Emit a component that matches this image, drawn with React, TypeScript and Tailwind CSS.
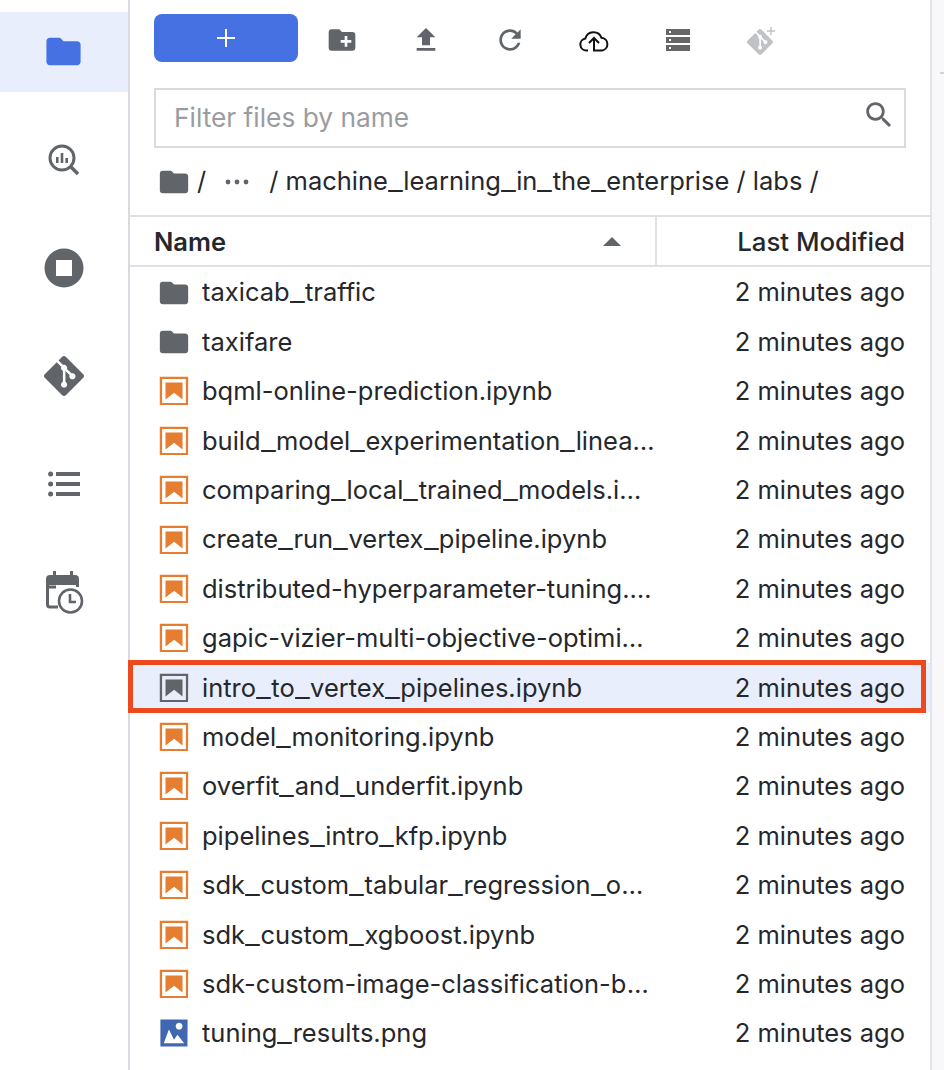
import React from 'react';
import { SiGit } from 'react-icons/si';

const FOLDER = 'M10 4H4c-1.1 0-1.99.9-1.99 2L2 18c0 1.1.9 2 2 2h16c1.1 0 2-.9 2-2V8c0-1.1-.9-2-2-2h-8l-2-2z';

const FolderIcon = ({ className }: { className: string }) => (
  <svg viewBox="0 0 24 24" className={className} fill="currentColor">
    <path d={FOLDER} />
  </svg>
);

const NotebookIcon = ({ className }: { className: string }) => (
  <svg viewBox="0 0 22 22" className={className} fill="currentColor">
    <path d="M18.7 3.3v15.4H3.3V3.3h15.4m1.5-1.5H1.8v18.3h18.3l.1-18.3z" />
    <path d="M16.5 16.5l-5.4-4.3-5.6 4.3v-11h11z" />
  </svg>
);

const ImageIcon = ({ className }: { className: string }) => (
  <svg viewBox="0 0 22 22" className={className}>
    <path fill="#fff" d="M2.2 2.2h17.5v17.5H2.2z" />
    <path
      fill="#3f68b0"
      d="M2.2 2.2v17.5h17.5l.1-17.5H2.2zm12.1 2.2c1.2 0 2.2 1 2.2 2.2s-1 2.2-2.2 2.2-2.2-1-2.2-2.2 1-2.2 2.2-2.2zM4.4 17.6l3.3-8.8 3.3 6.6 2.2-3.3 4.4 5.5H4.4z"
    />
  </svg>
);

// the underscores in the reference font are wider than Inter's here
const Wide = ({ text }: { text: string }) => (
  <>
    {text.split('_').map((part, i) => (
      <React.Fragment key={i}>
        {i > 0 && <span className="inline-block w-[15.3px] origin-left scale-x-[1.27]">_</span>}
        {part}
      </React.Fragment>
    ))}
  </>
);

const files: { name: string; type: 'folder' | 'notebook' | 'image'; selected?: boolean }[] = [
  { name: 'taxicab_traffic', type: 'folder' },
  { name: 'taxifare', type: 'folder' },
  { name: 'bqml-online-prediction.ipynb', type: 'notebook' },
  { name: 'build_model_experimentation_lineage_with_vertex.ipynb', type: 'notebook' },
  { name: 'comparing_local_trained_models.ipynb', type: 'notebook' },
  { name: 'create_run_vertex_pipeline.ipynb', type: 'notebook' },
  { name: 'distributed-hyperparameter-tuning.ipynb', type: 'notebook' },
  { name: 'gapic-vizier-multi-objective-optimization.ipynb', type: 'notebook' },
  { name: 'intro_to_vertex_pipelines.ipynb', type: 'notebook', selected: true },
  { name: 'model_monitoring.ipynb', type: 'notebook' },
  { name: 'overfit_and_underfit.ipynb', type: 'notebook' },
  { name: 'pipelines_intro_kfp.ipynb', type: 'notebook' },
  { name: 'sdk_custom_tabular_regression_online.ipynb', type: 'notebook' },
  { name: 'sdk_custom_xgboost.ipynb', type: 'notebook' },
  { name: 'sdk-custom-image-classification-batch.ipynb', type: 'notebook' },
  { name: 'tuning_results.png', type: 'image' },
];

const Sidebar = () => (
  <div className="w-[130px] shrink-0 border-r-2 border-[#d9dae0] pt-[12px] flex flex-col gap-[28px] text-[#616469]">
    <div className="h-[80px] bg-[#e8eefb] flex items-center justify-center text-[#4571e3]">
      <FolderIcon className="w-[41px] h-[41px] -ml-[2px] -mt-[2px]" />
    </div>
    <div className="h-[80px] flex items-center justify-center">
      <svg viewBox="0 0 32 32" className="w-[32px] h-[32px] ml-[-1px]">
        <circle cx="14" cy="14" r="12" fill="none" stroke="currentColor" strokeWidth="3" />
        <path d="M22.5 22.5L30 30" stroke="currentColor" strokeWidth="3.6" />
        <path d="M8 13h2.6v6H8zM12.7 9h2.6v10h-2.6zM17.4 14h2.6v5h-2.6z" fill="currentColor" />
      </svg>
    </div>
    <div className="h-[80px] flex items-center justify-center">
      <svg viewBox="0 0 40 40" className="w-[40px] h-[40px]">
        <circle cx="20" cy="20" r="19.5" fill="currentColor" />
        <rect x="12" y="12" width="16" height="16" fill="#fff" />
      </svg>
    </div>
    <div className="h-[80px] flex items-center justify-center">
      <SiGit className="w-[40px] h-[40px]" />
    </div>
    <div className="h-[80px] flex items-center justify-center">
      <svg viewBox="0 0 32 26" className="w-[32px] h-[26px]" fill="currentColor">
        <circle cx="2.6" cy="3" r="2.5" />
        <circle cx="2.6" cy="13" r="2.5" />
        <circle cx="2.6" cy="23" r="2.5" />
        <rect x="8" y="1" width="24" height="4" />
        <rect x="8" y="11" width="24" height="4" />
        <rect x="8" y="21" width="24" height="4" />
      </svg>
    </div>
    <div className="h-[80px] flex items-center justify-center">
      <svg viewBox="0 0 40 44" className="w-[40px] h-[44px]">
        <path
          d="M12 17H3.5M14 37H6a2.5 2.5 0 0 1-2.500-2.500V9A2.500 2.500 0 0 1 6 6.500h25A2.500 2.500 0 0 1 33.500 9v8"
          fill="none"
          stroke="currentColor"
          strokeWidth="3"
        />
        <path d="M3 8h31v7H3zM9 1h3v6H9zM26 1h3v6h-3z" fill="currentColor" />
        <circle cx="26.500" cy="31" r="11.500" fill="#fff" stroke="currentColor" strokeWidth="2.600" />
        <path d="M26 24v8h6" fill="none" stroke="currentColor" strokeWidth="2.600" />
      </svg>
    </div>
  </div>
);

const Toolbar = () => (
  <div className="flex items-center h-[48px] mt-[14px] ml-[24px] text-[#616469]">
    <button className="w-[144px] h-[48px] rounded-[8px] bg-[#4571e3] flex items-center justify-center">
      <svg viewBox="0 0 20 20" className="w-[20px] h-[20px]">
        <path d="M10 1v18M1 10h18" stroke="#fff" strokeWidth="2" />
      </svg>
    </button>
    <div className="flex items-center w-[84px] justify-center ml-[2px] mt-[4px]">
      <svg viewBox="0 0 24 24" className="w-[32px] h-[32px]" fill="currentColor">
        <path d="M20 6h-8l-2-2H4c-1.110 0-1.990.89-1.990 2L2 18c0 1.110.89 2 2 2h16c1.110 0 2-.89 2-2V8c0-1.110-.89-2-2-2zm-1 8h-3v3h-2v-3h-3v-2h3V9h2v3h3v2z" />
      </svg>
    </div>
    <div className="flex items-center w-[84px] justify-center mt-[4px]">
      <svg viewBox="0 0 24 24" className="w-[32px] h-[32px]" fill="currentColor">
        <path d="M9 16h6v-6h4l-7-7-7 7h4zm-4 2h14v2H5z" />
      </svg>
    </div>
    <div className="flex items-center w-[84px] justify-center mt-[4px]">
      <svg viewBox="0 0 24 24" className="w-[32px] h-[32px]" fill="currentColor">
        <path d="M17.650 6.350C16.200 4.900 14.210 4 12 4c-4.420 0-7.990 3.580-7.990 8s3.570 8 7.990 8c3.730 0 6.840-2.550 7.730-6h-2.080c-.82 2.330-3.040 4-5.650 4-3.310 0-6-2.690-6-6s2.690-6 6-6c1.660 0 3.140.69 4.220 1.780L13 11h7V4l-2.350 2.350z" />
      </svg>
    </div>
    <div className="flex items-center w-[84px] justify-center mt-[4px]">
      <svg viewBox="0 0 30 24" className="w-[30px] h-[24px]" fill="none" stroke="#111" strokeWidth="2">
        <path d="M9 22.500H7.500a6 6 0 0 1-1.200-11.900A8.500 8.500 0 0 1 22.500 9.800 6.400 6.400 0 0 1 23 22.500h-9" />
        <path d="M15 23V10.500M10 15l5-5 5 5" />
      </svg>
    </div>
    <div className="flex items-center w-[84px] justify-center mt-[4px]">
      <div className="w-[24px] flex flex-col gap-[2px]">
        {[0, 1, 2].map((i) => (
          <div key={i} className="h-[6px] bg-[#666] flex items-center pl-[3px]">
            <div className="w-[2px] h-[2px] bg-white" />
          </div>
        ))}
      </div>
    </div>
    <div className="relative flex items-center w-[84px] justify-center mt-[4px] text-[#c1c2c5]">
      <SiGit className="w-[26px] h-[26px] -ml-[4px] mt-[4px]" />
      <svg viewBox="0 0 8 8" className="absolute top-[2px] left-[47px] w-[8px] h-[8px]">
        <path d="M4 0v8M0 4h8" stroke="currentColor" strokeWidth="1.400" />
      </svg>
    </div>
  </div>
);

const Row = ({ file }: { file: (typeof files)[number] }) => (
  <div className={`relative flex items-center h-[49.4px] ${file.selected ? 'bg-[#e8eefb]' : ''}`}>
    <div className="w-[527px] shrink-0 flex items-center pl-[27px] pr-[2px]">
      {file.type === 'folder' && <FolderIcon className="w-[34px] h-[34px] shrink-0 text-[#616469]" />}
      {file.type === 'notebook' && (
        <NotebookIcon className={`w-[34px] h-[34px] shrink-0 ${file.selected ? 'text-[#616469]' : 'text-[#e57e31]'}`} />
      )}
      {file.type === 'image' && <ImageIcon className="w-[34px] h-[34px] shrink-0" />}
      <span className="ml-[11px] truncate">
        <Wide text={file.name} />
      </span>
    </div>
    <div className="flex-1 text-right pr-[25px] whitespace-nowrap">2 minutes ago</div>
    {file.selected && (
      <div className="absolute left-[-2px] right-[4px] top-[-3px] bottom-[-1px] border-[5px] border-[#ec4a1c]" />
    )}
  </div>
);

export default function App() {
  return (
    <div className="flex w-[944px] h-[1070px] overflow-hidden bg-white text-[#25272b] text-[25.500px] font-['Inter',sans-serif]">
      <Sidebar />
      <div className="w-[802px] shrink-0 border-r-2 border-[#e3e4e9] flex flex-col">
        <Toolbar />
        <div className="mx-[24px] mt-[26px] h-[60px] border-2 border-[#d9dae0] flex items-center justify-between pl-[18px] pr-[8px]">
          <span className="text-[#9a9ca1] text-[26.300px]">Filter files by name</span>
          <svg viewBox="0 0 24 24" className="w-[34px] h-[34px] text-[#616469] -mt-[6px]" fill="currentColor">
            <path d="M15.500 14h-.79l-.28-.27C15.410 12.590 16 11.110 16 9.500 16 5.910 13.090 3 9.500 3S3 5.910 3 9.500 5.910 16 9.500 16c1.610 0 3.090-.59 4.230-1.570l.27.28v.79l5 4.990L20.490 19l-4.990-5zm-6 0C7.010 14 5 11.990 5 9.500S7.010 5 9.500 5 14 7.010 14 9.500 11.990 14 9.500 14z" />
          </svg>
        </div>
        <div className="flex items-center h-[67px] pl-[27px]">
          <FolderIcon className="w-[34px] h-[34px] text-[#616469]" />
          <span className="ml-[6px]">/</span>
          <svg viewBox="0 0 24 6" className="w-[24px] h-[6px] ml-[19px] text-[#616469]" fill="currentColor">
            <circle cx="3" cy="3" r="2.400" />
            <circle cx="12" cy="3" r="2.400" />
            <circle cx="21" cy="3" r="2.400" />
          </svg>
          <span className="ml-[20px] whitespace-nowrap">
            <Wide text="/ machine_learning_in_the_enterprise / labs /" />
          </span>
        </div>
        <div className="flex h-[52px] border-y-2 border-[#e0e1e6] items-stretch">
          <div className="w-[527px] shrink-0 flex items-center justify-between pl-[24px] pr-[34px] border-r-2 border-[#e3e4e9]">
            <span className="font-semibold mt-[2px]">Name</span>
            <svg viewBox="0 0 18 9" className="w-[18px] h-[9px] text-[#616469]" fill="currentColor">
              <path d="M0 9L9 0l9 9z" />
            </svg>
          </div>
          <div className="flex-1 flex items-center justify-end pr-[25px] font-medium text-[25.800px] pt-[2px]">Last Modified</div>
        </div>
        <div className="flex flex-col pt-[0.9px]">
          {files.map((f) => (
            <Row key={f.name} file={f} />
          ))}
        </div>
      </div>
      <div className="flex-1 bg-[#f8f8fb] pt-[72px]">
        <div className="ml-[8px] h-[2px] w-[4px] bg-[#d0d1d6]" />
      </div>
    </div>
  );
}
